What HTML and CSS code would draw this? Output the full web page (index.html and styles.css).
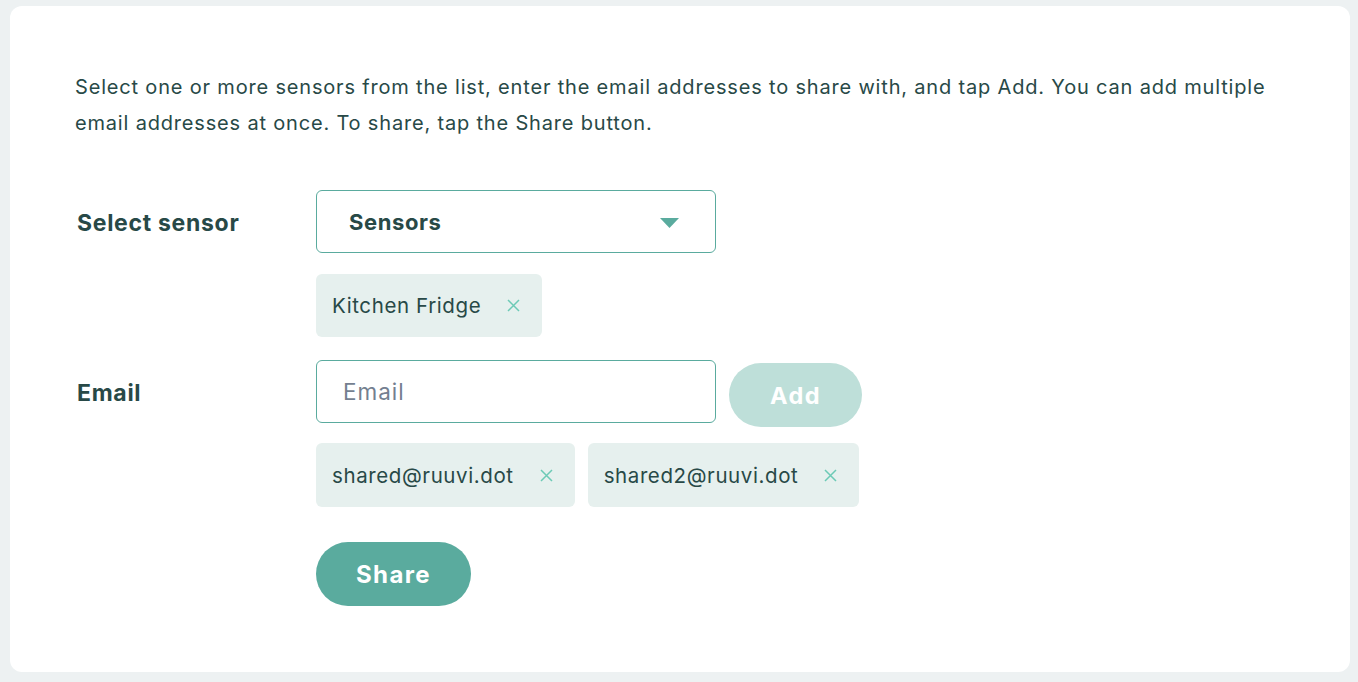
FILE: index.html
```html
<!DOCTYPE html>
<html>
<head>
<meta charset="utf-8">
<link rel="stylesheet" href="styles.css">
</head>
<body>
<main class="card">
  <p class="intro">Select one or more sensors from the list, enter the email addresses to share with, and tap Add. You can add multiple email addresses at once. To share, tap the Share button.</p>
  <div class="row">
    <div class="label">Select sensor</div>
    <div class="field">
      <div class="select">
        <span>Sensors</span>
        <svg class="caret" width="19" height="10" viewBox="0 0 19 10"><path d="M0 0H19L9.5 10Z" fill="#5aab9e"/></svg>
      </div>
      <div class="chips">
        <div class="chip">Kitchen Fridge<span class="x"><svg width="13" height="13" viewBox="0 0 13 13"><path d="M1 1L12 12M12 1L1 12" stroke="#6ccab6" stroke-width="1.5"/></svg></span></div>
      </div>
    </div>
  </div>
  <div class="row email-row">
    <div class="label">Email</div>
    <div class="field">
      <div class="input-line">
        <div class="input">Email</div>
        <button class="add">Add</button>
      </div>
      <div class="chips email-chips">
        <div class="chip">shared@ruuvi.dot<span class="x"><svg width="13" height="13" viewBox="0 0 13 13"><path d="M1 1L12 12M12 1L1 12" stroke="#6ccab6" stroke-width="1.5"/></svg></span></div>
        <div class="chip">shared2@ruuvi.dot<span class="x"><svg width="13" height="13" viewBox="0 0 13 13"><path d="M1 1L12 12M12 1L1 12" stroke="#6ccab6" stroke-width="1.5"/></svg></span></div>
      </div>
      <button class="share">Share</button>
    </div>
  </div>
</main>
</body>
</html>
```

FILE: styles.css
```css
html, body {
  margin: 0;
  padding: 0;
  background: #edf1f2;
}
body {
  padding: 6px 8px 10px 10px;
  font-family: "Inter", "Open Sans", sans-serif;
  color: #284947;
}
.card {
  background: #ffffff;
  border-radius: 12px;
  height: 666px;
  box-sizing: border-box;
  padding: 63px 65px 0 65px;
}
.intro {
  margin: 0 0 49px 0;
  font-size: 20px;
  line-height: 36px;
  letter-spacing: 0.82px;
}
.row {
  display: flex;
}
.label {
  width: 239px;
  padding-left: 2px;
  padding-top: 2px;
  font-size: 23px;
  font-weight: 700;
  line-height: 63px;
  letter-spacing: 0.7px;
}
.field {
  display: flex;
  flex-direction: column;
}
.select {
  width: 400px;
  height: 63px;
  box-sizing: border-box;
  border: 1px solid #5aab9e;
  border-radius: 6px;
  display: flex;
  align-items: center;
  justify-content: space-between;
  padding: 0 36px 0 32px;
  font-size: 22px;
  font-weight: 700;
  letter-spacing: 0.6px;
}
.caret { margin-top: 2px; }
.chips {
  display: flex;
  gap: 13px;
  margin-top: 21px;
}
.email-chips { margin-top: 16px; }
.chip {
  height: 63px;
  background: #e6f0ee;
  border-radius: 6px;
  display: flex;
  align-items: center;
  padding: 0 22px 0 16px;
  font-size: 20.5px;
  letter-spacing: 0.6px;
}
.email-chips .chip { height: 64px; }
.x {
  display: flex;
  margin-left: 26px;
}
.email-row { margin-top: 23px; }
.input-line {
  display: flex;
  align-items: flex-start;
  gap: 13px;
}
.input {
  width: 400px;
  height: 63px;
  box-sizing: border-box;
  border: 1px solid #5aab9e;
  border-radius: 6px;
  display: flex;
  align-items: center;
  padding-left: 26px;
  font-size: 22.5px;
  letter-spacing: 1px;
  color: #747f90;
}
button {
  font-family: inherit;
  border: none;
  color: #ffffff;
  font-weight: 700;
  border-radius: 32px;
  height: 64px;
  padding: 0;
}
.add {
  width: 133px;
  margin-top: 3px;
  background: #bedfd9;
  font-size: 23.5px;
  letter-spacing: 1.5px;
}
.share {
  width: 155px;
  margin-top: 35px;
  background: #5aab9e;
  font-size: 24px;
  letter-spacing: 1.4px;
}
```
